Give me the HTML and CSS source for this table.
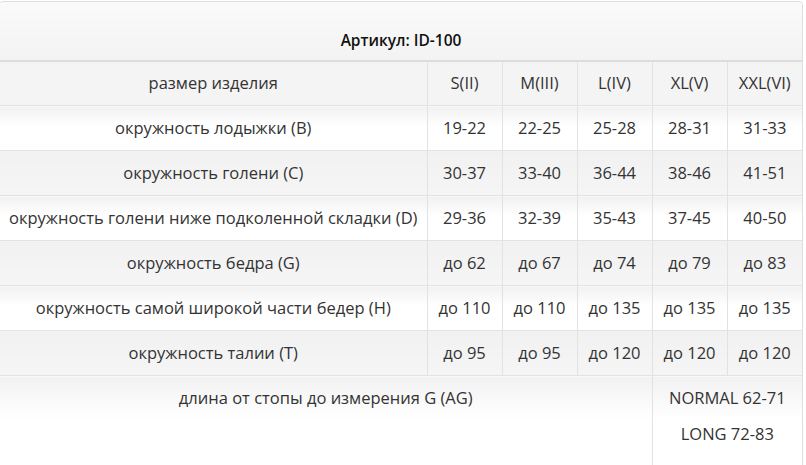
FILE: index.html
```html
<!DOCTYPE html>
<html lang="ru">
<head>
<meta charset="utf-8">
<title>Артикул: ID-100</title>
<link rel="stylesheet" href="styles.css">
</head>
<body>
<div class="sheet">
  <table class="sizes">
    <colgroup>
      <col class="c-name">
      <col class="c-size"><col class="c-size"><col class="c-size"><col class="c-size"><col class="c-size">
    </colgroup>
    <thead>
      <tr class="title-row"><th colspan="6">Артикул: ID-100</th></tr>
      <tr class="head-row">
        <td>размер изделия</td><td>S(II)</td><td>M(III)</td><td>L(IV)</td><td>XL(V)</td><td>XXL(VI)</td>
      </tr>
    </thead>
    <tbody>
      <tr class="light"><td>окружность лодыжки (B)</td><td>19-22</td><td>22-25</td><td>25-28</td><td>28-31</td><td>31-33</td></tr>
      <tr class="dark"><td>окружность голени (C)</td><td>30-37</td><td>33-40</td><td>36-44</td><td>38-46</td><td>41-51</td></tr>
      <tr class="light"><td>окружность голени ниже подколенной складки (D)</td><td>29-36</td><td>32-39</td><td>35-43</td><td>37-45</td><td>40-50</td></tr>
      <tr class="dark"><td>окружность бедра (G)</td><td>до 62</td><td>до 67</td><td>до 74</td><td>до 79</td><td>до 83</td></tr>
      <tr class="light"><td>окружность самой широкой части бедер (H)</td><td>до 110</td><td>до 110</td><td>до 135</td><td>до 135</td><td>до 135</td></tr>
      <tr class="dark"><td>окружность талии (T)</td><td>до 95</td><td>до 95</td><td>до 120</td><td>до 120</td><td>до 120</td></tr>
      <tr class="light last-row">
        <td colspan="4">длина от стопы до измерения G (AG)</td>
        <td colspan="2" class="variants"><p>NORMAL 62-71</p><p>LONG 72-83</p></td>
      </tr>
    </tbody>
  </table>
</div>
</body>
</html>
```

FILE: styles.css
```css
html, body {
  margin: 0;
  padding: 0;
  background: #fff;
}

body {
  font-family: "Open Sans", "Liberation Sans", sans-serif;
  font-size: 16.5px;
  color: #333;
}

.sheet {
  margin-left: -1px;
  margin-top: 1px;
  width: 802px;
  border: 1px solid #dedede;
  border-radius: 4px;
  overflow: hidden;
}

.sizes {
  width: 802px;
  border-collapse: collapse;
  table-layout: fixed;
}

.c-name { width: 427px; }
.c-size { width: 75px; }

.sizes td, .sizes th {
  text-align: center;
  vertical-align: top;
  line-height: 21px;
  padding: 11px 0 12px;
  border-top: 1px solid #e2e2e2;
  border-left: 1px solid #e2e2e2;
  white-space: nowrap;
}

.sizes td:first-child { border-left: 0; }

.title-row th {
  border: 0;
  border-bottom: 2px solid #dcdcdc;
  padding: 28px 0 9px;
  font-size: 15.5px;
  font-weight: 600;
  color: #111;
  background: linear-gradient(#fafafa, #f3f3f3);
}

.head-row td {
  border-top: 0;
  padding: 10px 0 12px;
  background: #f4f4f4;
}

.light td {
  background: linear-gradient(#f1f1f1 0, #fff 45%, #fff 100%);
}

.dark td {
  background: linear-gradient(#f1f1f1 0, #f5f5f5 100%);
}

.last-row td {
  padding-top: 11px;
}

.variants {
  padding-bottom: 20px;
}

.variants p {
  margin: 0 0 15px;
}
```
